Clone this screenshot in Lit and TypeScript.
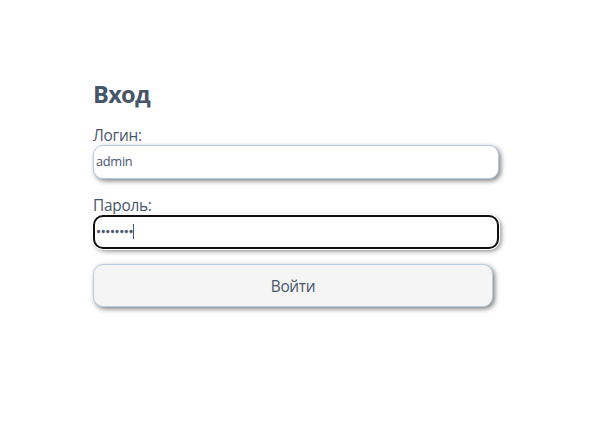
import { LitElement, html, css } from "lit";
import { customElement } from "lit/decorators.js";

@customElement("app-root")
export class AppRoot extends LitElement {
  static styles = css`
    :host {
      display: block;
      box-sizing: border-box;
      height: 423px;
      padding: 78px 93px 0;
      overflow: hidden;
      background: #fff;
      color: #475569;
      font-family: "Segoe UI", "Open Sans", "Noto Sans", sans-serif;
      font-size: 15.4px;
    }
    * {
      box-sizing: border-box;
    }
    .form {
      display: flex;
      flex-direction: column;
      width: 406px;
    }
    h1 {
      margin: 0 0 15px;
      font-size: 23.6px;
      line-height: 32px;
      font-weight: 700;
    }
    .title {
      letter-spacing: -0.7px;
    }
    .label {
      height: 20px;
      line-height: 21px;
      white-space: nowrap;
      letter-spacing: -0.25px;
    }
    .field {
      display: flex;
      align-items: center;
      height: 34px;
      padding: 0 2px 2px;
      border: 1px solid #b6cbe8;
      border-radius: 10px;
      background: #fff;
      box-shadow: 2px 2px 5px rgba(0, 0, 0, 0.5);
      font-size: 13.33px;
      line-height: 18px;
      white-space: nowrap;
    }
    .login {
      margin-bottom: 16px;
      font-size: 12.8px;
      letter-spacing: -0.3px;
    }
    .focused {
      border: 2px solid #101010;
      padding: 0 1px 2px;
      box-shadow: 0 0 0 1px #fff, 2px 2px 5px rgba(0, 0, 0, 0.5);
    }
    .dots {
      letter-spacing: -0.38px;
      -webkit-text-stroke: 0.3px #475569;
    }
    .caret {
      width: 1px;
      height: 15px;
      background: #475569;
    }
    button {
      width: 400px;
      height: 43px;
      margin: 15px 0 0;
      padding: 1px 0 0;
      border: 1px solid #b6cbe8;
      border-radius: 10px;
      background: #f5f5f5;
      box-shadow: 2px 2px 5px rgba(0, 0, 0, 0.5);
      color: inherit;
      font: inherit;
      letter-spacing: -0.35px;
    }
  `;

  render() {
    return html`
      <div class="form">
        <h1 class="title">Вход</h1>
        <div class="label">Логин:</div>
        <div class="field login"><span class="value">admin</span></div>
        <div class="label">Пароль:</div>
        <div class="field focused">
          <span class="dots">••••••••</span><span class="caret"></span>
        </div>
        <button type="button">Войти</button>
      </div>
    `;
  }
}
